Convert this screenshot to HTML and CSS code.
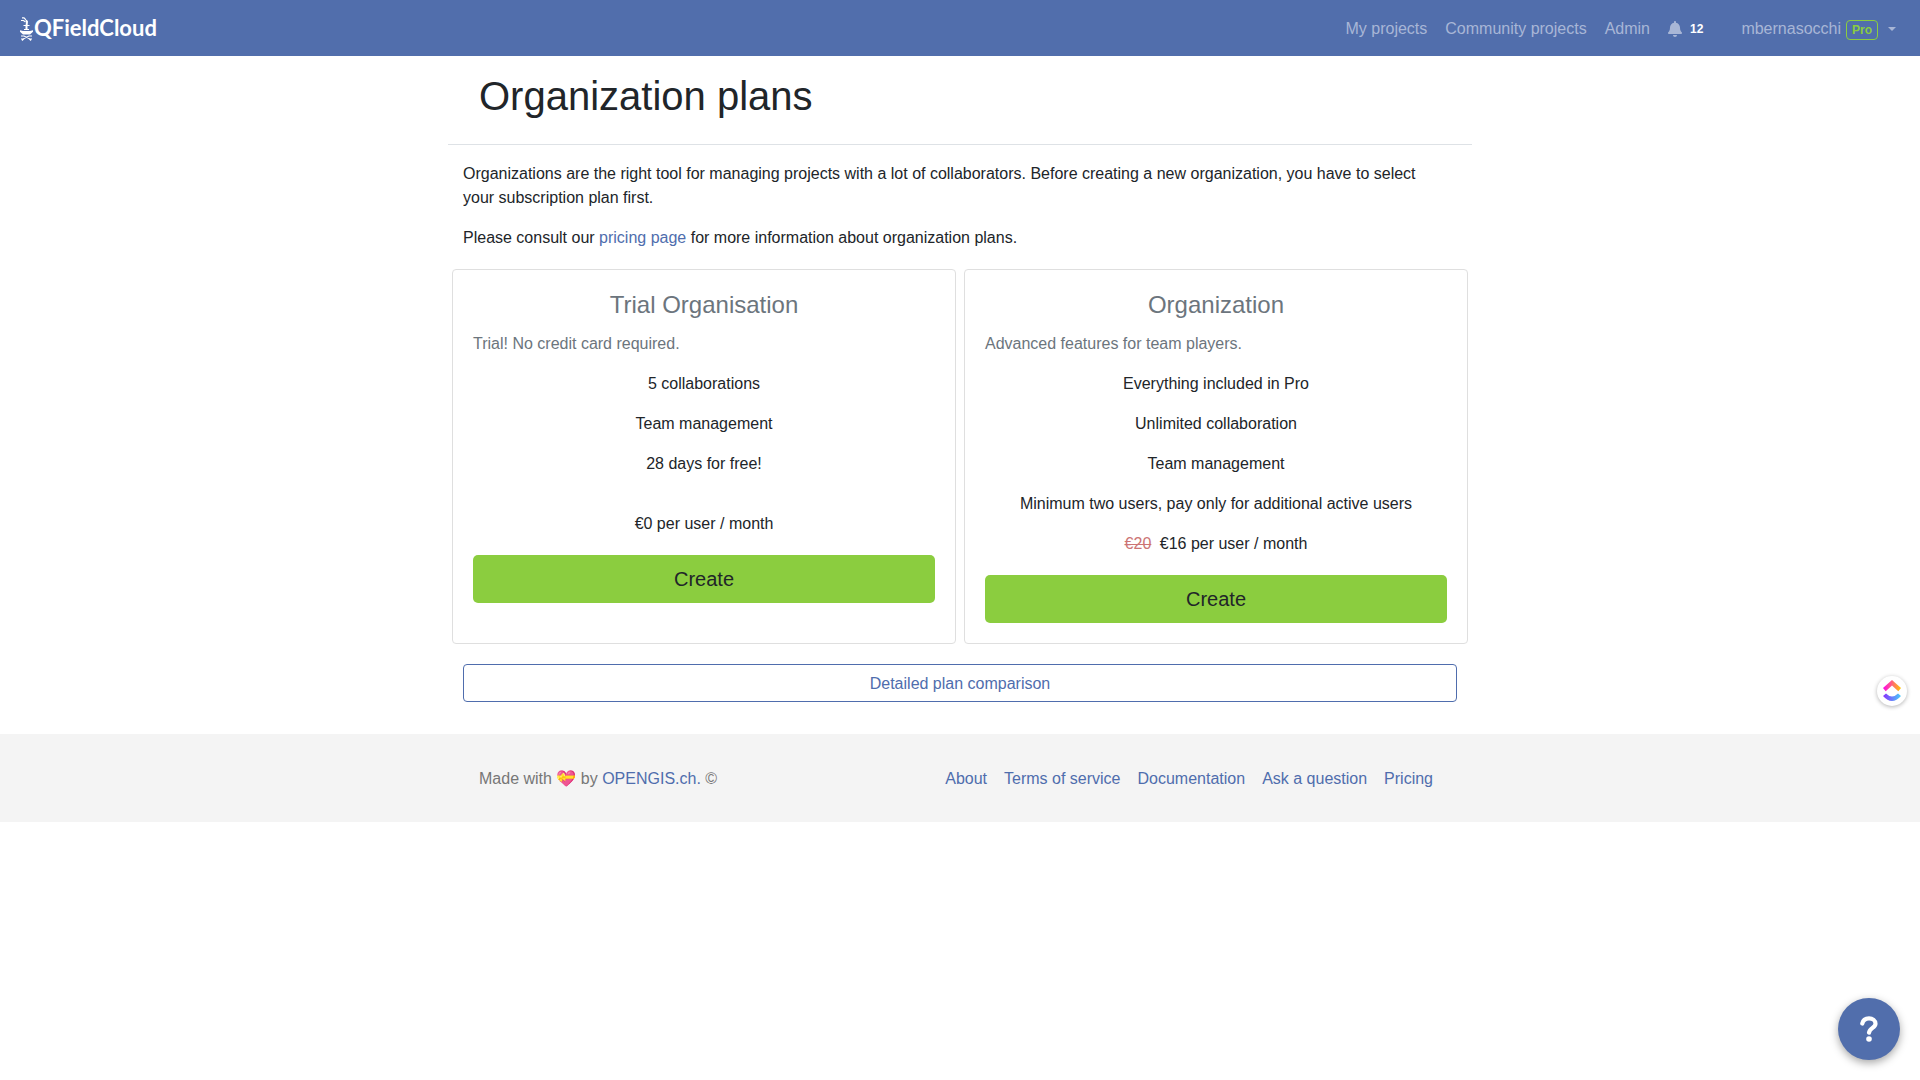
FILE: index.html
```html
<!DOCTYPE html>
<html lang="en">
<head>
<meta charset="utf-8">
<meta name="viewport" content="width=device-width, initial-scale=1">
<title>Organization plans - QFieldCloud</title>
<link rel="stylesheet" href="styles.css">
</head>
<body>
<header class="navbar">
  <a class="brand" href="#">
    <svg class="brand-icon" viewBox="0 0 14 24" aria-hidden="true">
      <path d="M2 .8h2l2 2M1 3.500h2.500l2 1.500" fill="none" stroke="#fff" stroke-width="1.200"/>
      <path d="M5.500 3h1.500l1 1.500L7.500 9v4h-2V9L6 5z" fill="#fff"/>
      <path d="M3.500 8.500h6M4 12.500h5" fill="none" stroke="#fff" stroke-width="1.200"/>
      <path d="M0 13.200l3 .8h7l3-.8v1.500l-3 2.800H3L0 14.700z" fill="#fff"/>
      <path d="M1 19h3l5 2.500 2 2M12 19H9l-5 2.500-2 2M1 22h3M9 22h3" fill="none" stroke="#fff" stroke-width="1.200"/>
    </svg>
    <span>QFieldCloud</span>
  </a>
  <nav class="nav" aria-label="Main">
    <a class="nav-link" href="#">My projects</a>
    <a class="nav-link" href="#">Community projects</a>
    <a class="nav-link" href="#">Admin</a>
    <a class="nav-link alerts" href="#" aria-label="12 notifications">
      <svg class="bell" viewBox="0 0 448 512" aria-hidden="true"><path fill="currentColor" d="M224 512c35.320 0 63.970-28.650 63.970-64H160.030c0 35.350 28.650 64 63.970 64zm215.390-149.710c-19.320-20.760-55.470-51.990-55.470-154.290 0-77.700-54.480-139.900-127.940-155.160V32c0-17.670-14.320-32-31.980-32s-31.980 14.330-31.980 32v20.840C118.560 68.100 64.080 130.300 64.080 208c0 102.300-36.150 133.530-55.470 154.290-6 6.450-8.660 14.160-8.610 21.710.11 16.400 12.980 32 32.100 32h383.800c19.120 0 32-15.600 32.100-32 .05-7.550-2.610-15.270-8.610-21.710z"/></svg>
      <span class="count">12</span>
    </a>
    <button class="nav-link user" type="button"><span>mbernasocchi</span><span class="pro">Pro</span><span class="caret"></span></button>
  </nav>
</header>

<main class="container">
  <div class="page-head"><h1>Organization plans</h1></div>
  <div class="intro">
    <p>Organizations are the right tool for managing projects with a lot of collaborators. Before creating a new organization, you have to select your subscription plan first.</p>
    <p>Please consult our <a href="#">pricing page</a> for more information about organization plans.</p>
  </div>
  <div class="plans">
    <section class="plan">
      <h2>Trial Organisation</h2>
      <p class="tagline">Trial! No credit card required.</p>
      <ul class="features">
        <li>5 collaborations</li>
        <li>Team management</li>
        <li>28 days for free!</li>
      </ul>
      <div class="purchase">
        <p class="price">€0 per user / month</p>
        <button class="create" type="button">Create</button>
      </div>
    </section>
    <section class="plan">
      <h2>Organization</h2>
      <p class="tagline">Advanced features for team players.</p>
      <ul class="features">
        <li>Everything included in Pro</li>
        <li>Unlimited collaboration</li>
        <li>Team management</li>
        <li>Minimum two users, pay only for additional active users</li>
      </ul>
      <div class="purchase">
        <p class="price"><del>€20</del> €16 per user / month</p>
        <button class="create" type="button">Create</button>
      </div>
    </section>
  </div>
  <div class="compare"><a class="outline-button" href="#">Detailed plan comparison</a></div>
</main>

<footer class="footer">
  <div class="container footer-row">
    <p>Made with 💝 by <a href="#">OPENGIS.ch.</a> ©</p>
    <nav class="footer-links" aria-label="Footer">
      <a href="#">About</a>
      <a href="#">Terms of service</a>
      <a href="#">Documentation</a>
      <a href="#">Ask a question</a>
      <a href="#">Pricing</a>
    </nav>
  </div>
</footer>

<button class="float quick" type="button" aria-label="ClickUp">
  <svg viewBox="0 0 18 22" aria-hidden="true">
    <defs>
      <linearGradient id="warm"><stop offset="0" stop-color="#ff02f0"/><stop offset="1" stop-color="#ffc800"/></linearGradient>
      <linearGradient id="cool"><stop offset="0" stop-color="#8930fd"/><stop offset="1" stop-color="#49ccf9"/></linearGradient>
    </defs>
    <path d="M9 0l9 8-2.700 3.200L9 5.500l-6.300 5.700L0 8z" fill="url(#warm)"/>
    <path d="M0 16l3-2.600q6 6 12 0l3 2.600q-9 10-18 0z" fill="url(#cool)"/>
  </svg>
</button>
<button class="float help" type="button" aria-label="Help">
  <svg viewBox="0 0 18 26" aria-hidden="true">
    <path d="M2.300 7.500C3 4 5.500 2.300 9 2.300s6.500 2.200 6.500 5.400c0 4-6 4.300-6.500 9" fill="none" stroke="#fff" stroke-width="4.200" stroke-linecap="round"/>
    <circle cx="9" cy="23" r="2.800" fill="#fff"/>
  </svg>
</button>
</body>
</html>
```
FILE: styles.css
```css
*, *::before, *::after { box-sizing: border-box; }

body {
  margin: 0;
  font: 16px/24px "Helvetica Neue", "Liberation Sans", Arial, sans-serif;
  color: #212529;
  background: #fff;
}

h1, h2, p, ul { margin: 0; font-weight: 400; }
a { color: #4f6dad; text-decoration: none; }
button { font: inherit; cursor: pointer; }

.navbar {
  display: flex;
  align-items: center;
  justify-content: space-between;
  min-height: 56px;
  padding: 0 16px;
  background: #516eac;
}
.brand {
  display: flex;
  align-items: center;
  padding-left: 4px;
  color: #fff;
  font: 700 22px/24px Lato, sans-serif;
}
.brand-icon { width: 14px; height: 24px; margin-top: 2px; }
.nav { display: flex; align-items: center; gap: 2px; }
.nav-link {
  padding: 9px 8px 7px;
  border: 0;
  background: none;
  color: #a8b6d6;
}
.alerts { display: flex; align-items: center; gap: 8px; }
.bell { width: 14px; height: 16px; }
.count { color: #fff; font-size: 12px; font-weight: 700; }
.user { display: flex; align-items: center; margin-left: 20px; }
.pro {
  margin: 1px 10px 0 5px;
  padding: 0 5px;
  border: 1px solid #8bcd3f;
  border-radius: 4px;
  color: #8bcd3f;
  font-size: 12px;
  font-weight: 700;
  line-height: 18px;
}
.caret {
  border: 4px solid transparent;
  border-top-color: currentColor;
  border-bottom: 0;
}

.container { width: 100%; max-width: 1024px; margin: 0 auto; }
.page-head {
  padding: 16px 31px 24px;
  border-bottom: 1px solid #dee2e6;
}
h1 { font-size: 40px; line-height: 48px; }
.intro { padding: 17px 24px 15px 15px; }
.intro p + p { margin-top: 16px; }

.plans {
  display: grid;
  grid-template-columns: 1fr 1fr;
  gap: 8px;
  padding: 4px;
}
.plan {
  display: flex;
  flex-direction: column;
  padding: 20px;
  border: 1px solid #dfdfdf;
  border-radius: 4px;
}
h2 {
  margin-bottom: 13px;
  color: #6c757d;
  font-size: 24px;
  line-height: 29px;
  text-align: center;
}
.tagline { color: #6c757d; }
.features { padding: 0; list-style: none; text-align: center; }
.features li { margin-top: 16px; }
.purchase { margin: auto 0; padding-top: 16px; text-align: center; }
.price { margin-bottom: 19px; }
.price del { margin-right: 4px; color: #cc7474; }
.create {
  width: 100%;
  padding: 9px 16px;
  border: 0;
  border-radius: 5px;
  background: #8bcd3f;
  color: #212529;
  font-size: 20px;
  line-height: 30px;
}
.compare { padding: 16px 15px 32px; }
.outline-button {
  display: block;
  padding: 7px 12px 5px;
  border: 1px solid #4f6dad;
  border-radius: 4px;
  text-align: center;
}

.footer { padding: 33px 0 31px; background: #f4f4f4; color: #777; }
.footer-row {
  display: flex;
  justify-content: space-between;
  padding: 0 31px;
}
.footer-links { display: flex; gap: 1px; }
.footer-links a { padding: 0 8px; }

.float {
  position: fixed;
  display: flex;
  align-items: center;
  justify-content: center;
  padding: 0;
  border: 0;
  border-radius: 50%;
}
.quick {
  right: 13px;
  bottom: 374px;
  width: 30px;
  height: 30px;
  background: #fff;
  box-shadow: 0 1px 4px rgba(0, 0, 0, .3);
}
.quick svg { width: 18px; height: 22px; }
.help {
  right: 20px;
  bottom: 20px;
  width: 62px;
  height: 62px;
  background: #516eac;
  box-shadow: 0 3px 8px rgba(0, 0, 0, .35);
}
.help svg { width: 18px; height: 26px; }
```
